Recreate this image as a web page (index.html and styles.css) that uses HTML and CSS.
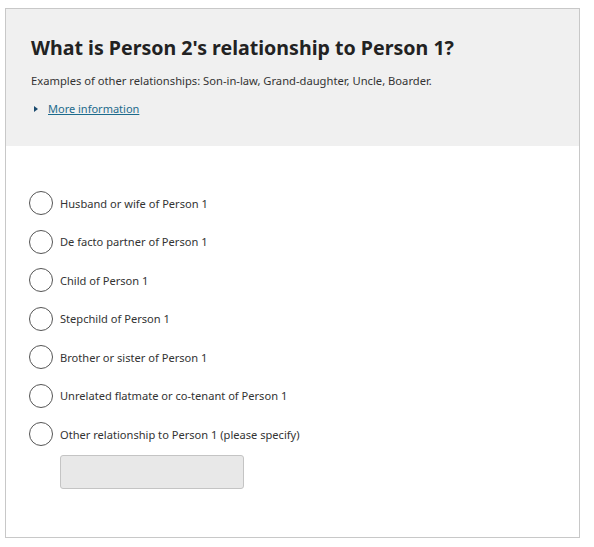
FILE: index.html
```html
<!DOCTYPE html>
<html lang="en">
<head>
    <meta charset="UTF-8">
    <meta name="viewport" content="width=device-width, initial-scale=1.0">
    <title>Relationship</title>
    <link rel="stylesheet" href="styles.css">
</head>
<body>
    <div class="question">
        <div class="question__header">
            <h1 class="question__title">What is Person 2's relationship to Person 1?</h1>
            <p class="question__hint">Examples of other relationships: Son-in-law, Grand-daughter, Uncle, Boarder.</p>
            <div class="question__more">
                <span class="question__arrow"></span>
                <a href="#" class="question__link">More information</a>
            </div>
        </div>
        <div class="question__body">
            <label class="radio"><span class="radio__circle"></span>Husband or wife of Person 1</label>
            <label class="radio"><span class="radio__circle"></span>De facto partner of Person 1</label>
            <label class="radio"><span class="radio__circle"></span>Child of Person 1</label>
            <label class="radio"><span class="radio__circle"></span>Stepchild of Person 1</label>
            <label class="radio"><span class="radio__circle"></span>Brother or sister of Person 1</label>
            <label class="radio"><span class="radio__circle"></span>Unrelated flatmate or co-tenant of Person 1</label>
            <label class="radio radio_last"><span class="radio__circle"></span>Other relationship to Person 1 (please specify)</label>
            <input type="text" class="question__other">
        </div>
    </div>
</body>
</html>
```
FILE: styles.css
```css
body{margin:0;padding:8px 0 0 5px;font-family:"Noto Sans","Open Sans",sans-serif;color:#333;background:#fff}
.question{width:573px;height:528px;border:1px solid #c8c8c8;box-sizing:content-box}
.question__header{height:137px;background:#f0f0f0;padding:26px 25px 0 25px;box-sizing:border-box}
.question__title{margin:0;font-size:19.6px;line-height:26px;font-weight:700;color:#222}
.question__hint{margin:12px 0 0 0;font-size:11.2px;line-height:16px;color:#333}
.question__more{display:flex;align-items:center;margin-top:12px;font-size:11px;line-height:16px}
.question__arrow{width:0;height:0;border-top:3px solid transparent;border-bottom:3px solid transparent;border-left:4px solid #1a4a6e;margin:0 10px 0 3px}
.question__link{color:#1d6b8c;text-decoration:underline}
.question__body{padding:45px 0 0 23px;display:flex;flex-direction:column;align-items:flex-start}
.radio{display:flex;align-items:center;height:24px;margin-bottom:14.5px;font-size:11.1px;color:#333;cursor:pointer}
.radio_last{margin-bottom:9px}
.radio__circle{width:22px;height:22px;border:1px solid #555;border-radius:50%;margin-right:7px;background:#fff}
.question__other{margin:0 0 0 31px;width:184px;height:34px;box-sizing:border-box;background:#e8e8e8;border:1px solid #c4c4c4;border-radius:3px;outline:0}
```
